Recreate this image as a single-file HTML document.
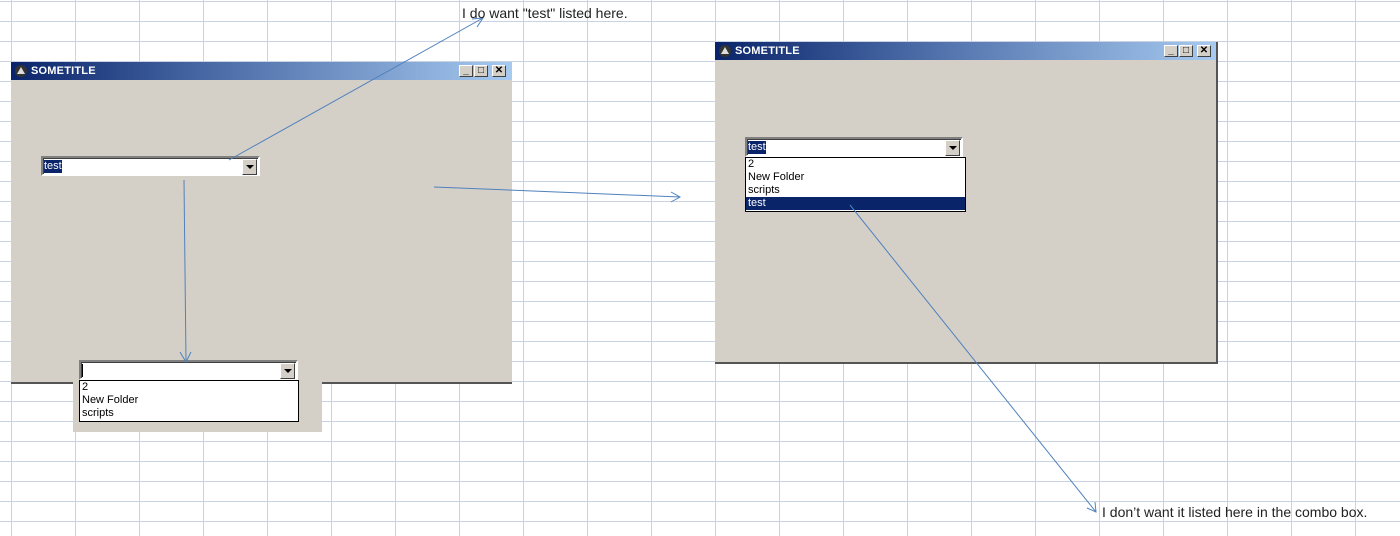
<!DOCTYPE html>
<html><head><meta charset="utf-8"><style>
body{margin:0;width:1400px;height:536px;overflow:hidden;position:relative;background:#fff;
background-image:linear-gradient(to right,#c9d3e4 1px,transparent 1px),linear-gradient(to bottom,#c9d3e4 1px,transparent 1px);
background-size:64px 20px;background-position:11px 1px;font-family:"Liberation Sans",sans-serif}
.abs{position:absolute}
.win{position:absolute;background:#d4d0c8}
.title{position:absolute;left:0;right:0;top:0;height:18px;background:linear-gradient(to right,#0a246a,#4a6aa6 40%,#a6caf0);color:#fff;font-weight:bold;font-size:11px;line-height:18px}
.title .ic{position:absolute;left:4px;top:3px;width:12px;height:12px;border-radius:50%;background:#333;border:0}
.title .ic:after{content:"";position:absolute;left:2px;top:2px;border-left:4px solid transparent;border-right:4px solid transparent;border-bottom:7px solid #ddd}
.title span{position:absolute;left:20px;top:0;letter-spacing:0.2px}
.btn{position:absolute;top:3px;width:14px;height:12px;background:#d4d0c8;border:1px solid;border-color:#fff #404040 #404040 #fff;box-sizing:border-box;font-size:10px;line-height:10px;text-align:center;color:#000}
.combo{position:absolute;background:#fff;border:2px solid;border-color:#808080 #fff #fff #808080;box-shadow:inset 1px 1px #404040;box-sizing:border-box;font-size:11px}
.dd{position:absolute;right:1px;top:1px;width:15px;height:16px;background:#d4d0c8;border:1px solid;border-color:#fff #404040 #404040 #fff;box-sizing:border-box}
.dd:after{content:"";position:absolute;left:3px;top:5px;border-left:4px solid transparent;border-right:4px solid transparent;border-top:4px solid #000}
.sel{background:#0a246a;color:#fff}
.list{position:absolute;background:#fff;border:1px solid #000;font-size:11px;line-height:13px;box-sizing:border-box}
.list div{padding-left:2px;height:13px}
.note{position:absolute;font-size:14px;color:#222;white-space:nowrap}
</style></head><body>

<div class="win" style="left:11px;top:62px;width:501px;height:320px;border-bottom:2px solid #555">
 <div class="title"><div class="ic"></div><span>SOMETITLE</span>
  <div class="btn" style="left:448px">_</div><div class="btn" style="left:463px">□</div><div class="btn" style="left:481px">✕</div></div>
 <div class="combo" style="left:30px;top:94px;width:219px;height:20px"><span class="sel abs" style="left:1px;top:2px;line-height:13px">test</span><div class="dd"></div></div>
</div>

<div class="abs" style="left:73px;top:356px;width:249px;height:76px;background:#d4d0c8"></div>
<div class="combo" style="left:79px;top:360px;width:219px;height:20px"><span class="abs" style="left:1px;top:2px;width:1px;height:13px;background:#000"></span><div class="dd"></div></div>
<div class="list" style="left:79px;top:380px;width:220px;height:42px"><div>2</div><div>New Folder</div><div>scripts</div></div>

<div class="win" style="left:715px;top:42px;width:501px;height:320px;border-right:2px solid #555;border-bottom:2px solid #555">
 <div class="title"><div class="ic"></div><span>SOMETITLE</span>
  <div class="btn" style="left:449px">_</div><div class="btn" style="left:464px">□</div><div class="btn" style="left:482px">✕</div></div>
 <div class="combo" style="left:30px;top:95px;width:218px;height:20px"><span class="sel abs" style="left:1px;top:2px;line-height:13px">test</span><div class="dd"></div></div>
</div>
<div class="list" style="left:745px;top:157px;width:221px;height:55px"><div>2</div><div>New Folder</div><div>scripts</div><div class="sel">test</div></div>

<svg class="abs" style="left:0;top:0" width="1400" height="536">
<g stroke="#4f81bd" stroke-width="1" fill="none">
<line x1="229" y1="160" x2="483" y2="18"/><polyline points="472,19 483,18 477,27"/>
<line x1="184" y1="180" x2="186" y2="362"/><polyline points="180,352 186,362 191,352"/>
<line x1="434" y1="187" x2="680" y2="197"/><polyline points="671,192 680,197 671,202"/>
<line x1="850" y1="205" x2="1096" y2="512"/><polyline points="1087,508 1096,512 1095,502"/>
</g></svg>

<div class="note" style="left:462px;top:5px">I do want "test" listed here.</div>
<div class="note" style="left:1102px;top:504px">I don’t want it listed here in the combo box.</div>
</body></html>
